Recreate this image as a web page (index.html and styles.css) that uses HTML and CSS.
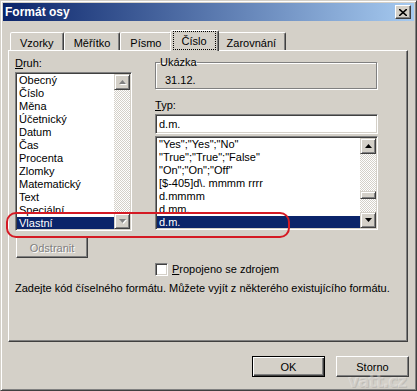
FILE: index.html
```html
<!DOCTYPE html>
<html>
    <head>
        <meta charset="utf-8">
        <title>Formát osy</title>
        <link rel="stylesheet" href="styles.css">
    </head>

    <body>
        <div class="window">
            <div class="titlebar">
                <span class="title">Formát osy</span>
                <span class="close">
                    <svg width="8" height="7" viewBox="0 0 8 7">
                        <path d="M0 0 L8 7 M8 0 L0 7" stroke="#000" stroke-width="1.6" fill="none"/>
                    </svg>
                </span>
            </div>

            <div class="tabs">
                <div class="tab">Vzorky</div>
                <div class="tab">Měřítko</div>
                <div class="tab">Písmo</div>
                <div class="tab active"><span class="focus">Číslo</span></div>
                <div class="tab">Zarovnání</div>
            </div>

            <div class="panel">
                <div class="cols">
                    <div class="col-left">
                        <div class="label"><u>D</u>ruh:</div>
                        <div class="listbox list-druh">
                            <ul class="items">
                                <li>Obecný</li>
                                <li>Číslo</li>
                                <li>Měna</li>
                                <li>Účetnický</li>
                                <li>Datum</li>
                                <li>Čas</li>
                                <li>Procenta</li>
                                <li>Zlomky</li>
                                <li>Matematický</li>
                                <li>Text</li>
                                <li>Speciální</li>
                                <li class="selected">Vlastní</li>
                            </ul>
                            <div class="scrollbar disabled">
                                <div class="arrow"><svg width="7" height="4" viewBox="0 0 7 4"><polygon points="0,4 7,4 3.5,0"/></svg></div>
                                <div class="track"></div>
                                <div class="arrow"><svg width="7" height="4" viewBox="0 0 7 4"><polygon points="0,0 7,0 3.5,4"/></svg></div>
                            </div>
                        </div>
                        <button class="btn btn-remove" disabled>Odstranit</button>
                    </div>

                    <div class="col-right">
                        <fieldset class="sample">
                            <legend>Ukázka</legend>
                            <div class="sample-value">31.12.</div>
                        </fieldset>
                        <div class="label label-typ"><u>T</u>yp:</div>
                        <div class="textbox">d.m.</div>
                        <div class="listbox list-typ">
                            <ul class="items">
                                <li>"Yes";"Yes";"No"</li>
                                <li>"True";"True";"False"</li>
                                <li>"On";"On";"Off"</li>
                                <li>[$-405]d\. mmmm rrrr</li>
                                <li>d.mmmm</li>
                                <li>d.mm.</li>
                                <li class="selected">d.m.</li>
                            </ul>
                            <div class="scrollbar">
                                <div class="arrow"><svg width="7" height="4" viewBox="0 0 7 4"><polygon points="0,4 7,4 3.5,0"/></svg></div>
                                <div class="track">
                                    <div class="thumb"></div>
                                </div>
                                <div class="arrow"><svg width="7" height="4" viewBox="0 0 7 4"><polygon points="0,0 7,0 3.5,4"/></svg></div>
                            </div>
                        </div>
                        <div class="check">
                            <span class="box"></span>
                            <span><u>P</u>ropojeno se zdrojem</span>
                        </div>
                    </div>
                </div>

                <p class="hint">Zadejte kód číselného formátu. Můžete vyjít z některého existujícího formátu.</p>

                <div class="annotation"></div>
            </div>

            <div class="buttons">
                <button class="btn btn-default">OK</button>
                <button class="btn">Storno</button>
            </div>

            <div class="watermark">vatt.cz</div>
        </div>
    </body>
</html>
```

FILE: styles.css
```css
body {
    margin : 0;
    background-color : #d4d0c8;
    color : #000;
    font-family : "Liberation Sans", Arial, sans-serif;
    font-size : 11px;
}

div.window {
    position : relative;
    width : 417px;
    height : 391px;
    box-sizing : border-box;
    border : 1px solid;
    border-color : #d4d0c8 #404040 #404040 #d4d0c8;
    box-shadow : inset 1px 1px #fff, inset -1px -1px #808080;
    padding : 2px;
    background-color : #d4d0c8;
    overflow : hidden;
}

/* title bar */

div.titlebar {
    height : 18px;
    display : flex;
    align-items : center;
    justify-content : space-between;
    padding : 0 3px 0 2px;
    background : linear-gradient(to right, #0a246a, #a6caf0);
}

span.title {
    color : #fff;
    font-weight : bold;
    font-size : 12px;
}

span.close {
    width : 16px;
    height : 14px;
    box-sizing : border-box;
    display : flex;
    align-items : center;
    justify-content : center;
    background-color : #d4d0c8;
    border : 1px solid;
    border-color : #fff #404040 #404040 #fff;
    box-shadow : inset -1px -1px #808080;
}

/* tabs */

div.tabs {
    display : flex;
    align-items : flex-end;
    height : 20px;
    margin : 9px 0 0 7px;
    position : relative;
    z-index : 1;
}

div.tab {
    height : 18px;
    box-sizing : border-box;
    padding : 3px 9px 0 9px;
    line-height : 14px;
    border : 1px solid;
    border-bottom : none;
    border-color : #fff #404040 transparent #fff;
    box-shadow : inset -1px 0 #808080;
    border-radius : 2px 2px 0 0;
    background-color : #d4d0c8;
}

div.tab.active {
    height : 21px;
    margin : 0 -2px -1px -2px;
    padding : 1px 3px 0 3px;
    position : relative;
}

span.focus {
    display : block;
    height : 17px;
    box-sizing : border-box;
    padding : 2px 8px 0 8px;
    outline : 1px dotted #000;
}

div.tab.active + div.tab {
    border-left-color : transparent;
}

/* panel */

div.panel {
    position : relative;
    width : 400px;
    height : 292px;
    box-sizing : border-box;
    margin-left : 5px;
    border : 1px solid;
    border-color : #fff #404040 #404040 #fff;
    box-shadow : inset -1px -1px #808080;
    padding : 6px 0 0 6px;
}

div.cols {
    display : flex;
    gap : 23px;
}

div.col-left {
    width : 117px;
    display : flex;
    flex-direction : column;
}

div.col-right {
    width : 223px;
    display : flex;
    flex-direction : column;
}

div.label {
    line-height : 13px;
    margin-bottom : 2px;
}

div.label-typ {
    margin-top : 10px;
}

/* list boxes */

div.listbox {
    display : flex;
    box-sizing : border-box;
    border : 1px solid;
    border-color : #808080 #fff #fff #808080;
    box-shadow : inset 1px 1px #404040, inset -1px -1px #d4d0c8;
    padding : 1px;
    background-color : #fff;
    overflow : hidden;
}

div.list-druh {
    height : 159px;
}

div.list-typ {
    height : 94px;
    margin-top : 2px;
}

ul.items {
    flex : 1;
    list-style : none;
    margin : 0;
    padding : 0;
    overflow : hidden;
}

ul.items li {
    height : 13px;
    line-height : 13px;
    padding-left : 2px;
    white-space : nowrap;
}

ul.items li.selected {
    background-color : #0a246a;
    color : #fff;
}

div.scrollbar {
    width : 16px;
    display : flex;
    flex-direction : column;
}

div.arrow {
    height : 16px;
    box-sizing : border-box;
    display : flex;
    align-items : center;
    justify-content : center;
    background-color : #d4d0c8;
    border : 1px solid;
    border-color : #d4d0c8 #404040 #404040 #d4d0c8;
    box-shadow : inset 1px 1px #fff, inset -1px -1px #808080;
}

div.arrow svg {
    fill : #000;
}

div.scrollbar.disabled div.arrow svg {
    fill : #808080;
    filter : drop-shadow(1px 1px 0 #fff);
}

div.track {
    flex : 1;
    background : repeating-conic-gradient(#fff 0 25%, #d4d0c8 0 50%) 0 0 / 2px 2px;
}

div.thumb {
    height : 8px;
    margin-top : 37px;
    box-sizing : border-box;
    background-color : #d4d0c8;
    border : 1px solid;
    border-color : #d4d0c8 #404040 #404040 #d4d0c8;
    box-shadow : inset 1px 1px #fff, inset -1px -1px #808080;
}

/* group box */

fieldset.sample {
    width : 222px;
    box-sizing : border-box;
    margin : -1px 0 0 0;
    padding : 5px 0 1px 7px;
    border : 1px solid #808080;
    box-shadow : inset 1px 1px #fff, 1px 1px #fff;
}

fieldset.sample legend {
    padding : 0;
    margin-left : -3px;
    line-height : 13px;
}

div.sample-value {
    line-height : 13px;
    padding-left : 2px;
}

div.textbox {
    height : 20px;
    box-sizing : border-box;
    border : 1px solid;
    border-color : #808080 #fff #fff #808080;
    box-shadow : inset 1px 1px #404040, inset -1px -1px #d4d0c8;
    background-color : #fff;
    padding : 2px 0 0 3px;
    line-height : 14px;
}

div.check {
    display : flex;
    align-items : center;
    gap : 4px;
    margin-top : 33px;
    line-height : 13px;
}

span.box {
    width : 13px;
    height : 13px;
    box-sizing : border-box;
    border : 1px solid;
    border-color : #808080 #fff #fff #808080;
    box-shadow : inset 1px 1px #404040, inset -1px -1px #d4d0c8;
    background-color : #fff;
}

p.hint {
    margin : 6px 0 0 0;
    line-height : 13px;
}

/* buttons */

.btn {
    width : 73px;
    height : 21px;
    box-sizing : border-box;
    font-family : inherit;
    font-size : 11px;
    color : #000;
    background-color : #d4d0c8;
    border : 1px solid;
    border-color : #fff #404040 #404040 #fff;
    box-shadow : inset -1px -1px #808080;
    padding : 0;
}

.btn-remove {
    width : 72px;
    margin : 6px 0 0 1px;
    color : #808080;
    text-shadow : 1px 1px 0 #fff;
}

.btn-default {
    border : 1px solid #000;
    box-shadow : inset 1px 1px #fff, inset -1px -1px #404040, inset -2px -2px #808080;
}

div.buttons {
    display : flex;
    justify-content : flex-end;
    gap : 11px;
    margin-top : 14px;
    padding-right : 5px;
}

/* markup over the screenshot */

div.annotation {
    position : absolute;
    left : -3px;
    top : 161px;
    width : 280px;
    height : 22px;
    border : 2px solid #d41a24;
    border-radius : 10px;
}

div.watermark {
    position : absolute;
    right : 10px;
    bottom : 0;
    line-height : 18px;
    font-family : "DejaVu Sans", sans-serif;
    font-weight : bold;
    font-size : 17px;
    letter-spacing : -1px;
    color : rgba(255, 255, 255, 0.3);
    text-shadow : 1px 1px 0 rgba(128, 128, 128, 0.25);
}
```
